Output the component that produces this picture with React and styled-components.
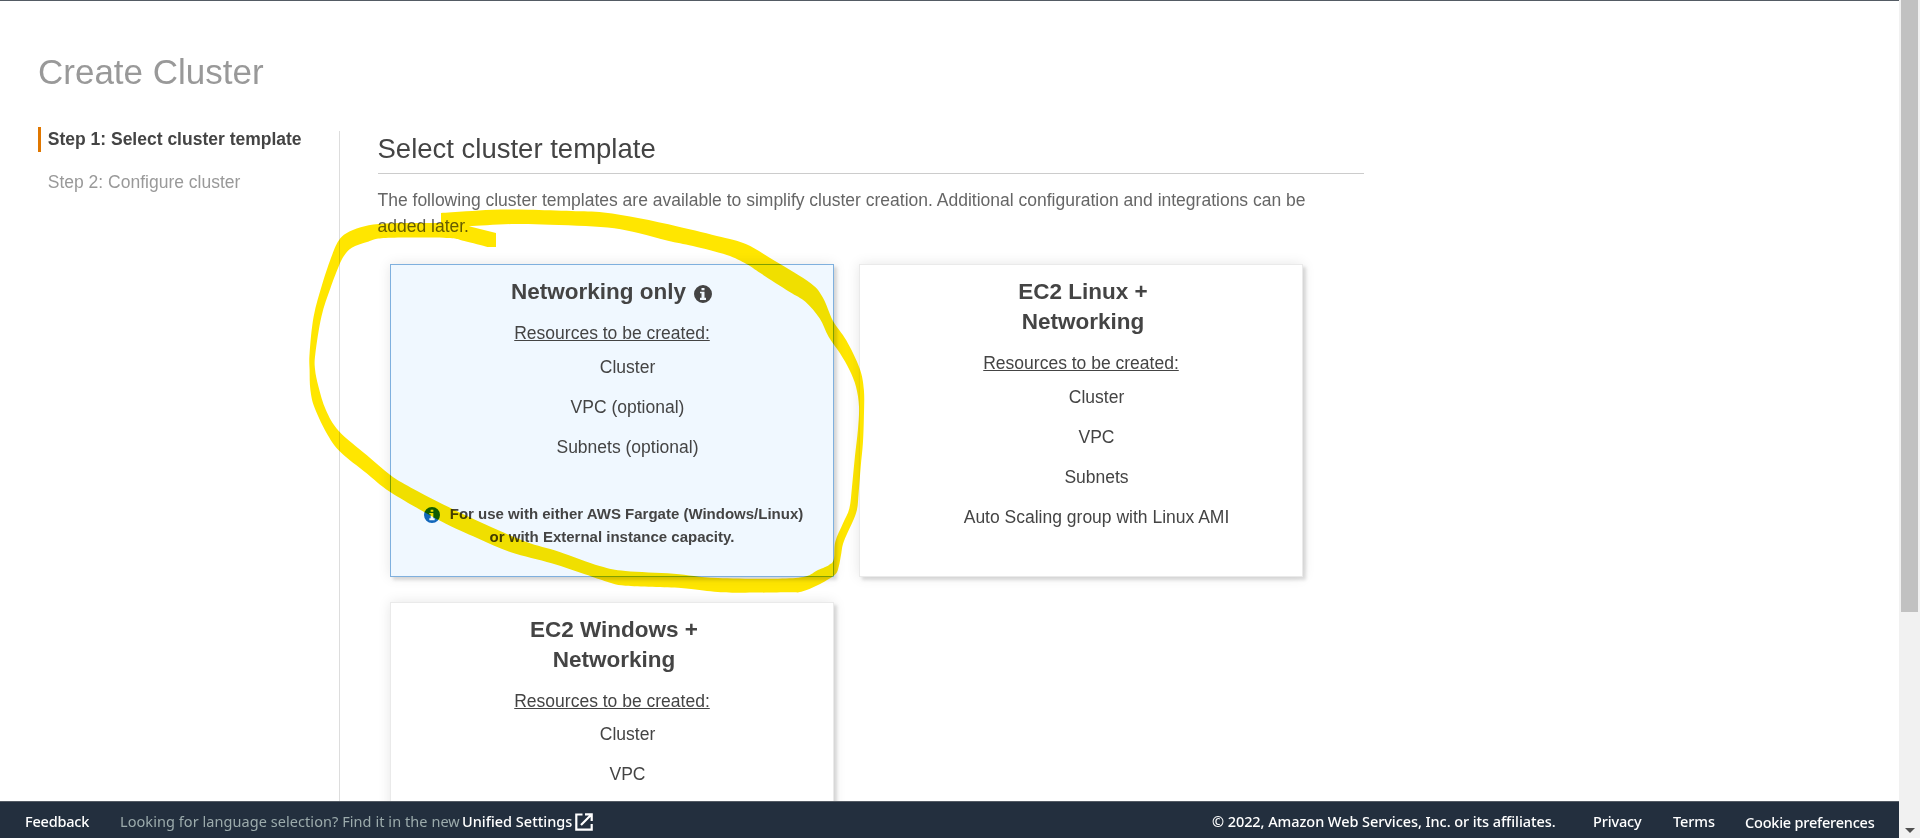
import React from 'react';
import styled, { createGlobalStyle } from 'styled-components';

const GlobalStyle = createGlobalStyle`
  * { box-sizing: border-box; }
  html, body { margin: 0; padding: 0; overflow: hidden; background: #fff; }
  body { font-family: "Liberation Sans", Arial, sans-serif; font-size: 17.5px; color: #444; }
  h1, h2, h3, p, ul { margin: 0; padding: 0; }
`;

const Window = styled.div`
  display: flex;
  width: 1920px;
  height: 838px;
  position: relative;
  overflow: hidden;
`;

const Page = styled.div`
  display: flex;
  flex-direction: column;
  width: 1899px;
  height: 838px;
  border-top: 1px solid #545b64;
`;

const Body = styled.main`
  flex: 1;
  min-height: 0;
  overflow: hidden;
  padding: 51px 38px 0;
`;

const PageTitle = styled.h1`
  font-size: 35px;
  line-height: 40px;
  font-weight: 400;
  color: #999;
`;

const Columns = styled.div`
  display: flex;
  align-items: flex-start;
  margin-top: 35px;
`;

const Steps = styled.nav`
  width: 301px;
  display: flex;
  flex-direction: column;
  gap: 18px;
`;

const Step = styled.div`
  height: 25px;
  line-height: 25px;
  padding-left: 6.75px;
  white-space: nowrap;
  border-left: 3px solid ${(p) => (p.$active ? '#e07700' : 'transparent')};
  font-weight: ${(p) => (p.$active ? 700 : 400)};
  color: ${(p) => (p.$active ? '#444' : '#999')};
`;

const Content = styled.section`
  width: 1025px;
  height: 900px;
  margin-top: 4px;
  padding-left: 37.5px;
  border-left: 1px solid #ddd;
`;

const SectionTitle = styled.h2`
  height: 43px;
  padding-top: 1px;
  line-height: 34px;
  font-size: 27.5px;
  font-weight: 400;
  border-bottom: 1px solid #ccc;
`;

const Intro = styled.p`
  margin-top: 13px;
  padding-right: 40px;
  line-height: 26.25px;
  color: #666;
`;

const Cards = styled.div`
  display: grid;
  grid-template-columns: 444px 444px;
  column-gap: 25px;
  row-gap: 25px;
  margin: 24px 0 0 12.5px;
`;

const Card = styled.article`
  height: 313px;
  padding: 12px 18px 0;
  text-align: center;
  background: ${(p) => (p.$selected ? '#f0f8ff' : '#fff')};
  border: 1px solid ${(p) => (p.$selected ? '#7fb0de' : '#eaeaea')};
  box-shadow: 0 0 12px rgba(0, 0, 0, 0.1), 3px 3px 3px rgba(0, 0, 0, 0.12);
`;

const CardTitle = styled.h3`
  width: 206px;
  margin: 0 auto;
  padding-left: ${(p) => (p.$oneLine ? 0 : 4)}px;
  padding-right: ${(p) => (p.$oneLine ? 1 : 0)}px;
  display: flex;
  justify-content: center;
  align-items: center;
  gap: 8px;
  white-space: ${(p) => (p.$oneLine ? 'nowrap' : 'normal')};
  font-size: 22.5px;
  line-height: 30px;
  font-weight: 700;
  svg { width: 18px; height: 18px; margin-top: 5px; flex: none; }
`;

const ResourcesLabel = styled.p`
  margin-top: 13px;
  line-height: 26px;
  text-decoration: underline;
  text-underline-offset: 1px;
  text-decoration-thickness: 1px;
`;

const Resources = styled.ul`
  list-style: none;
  padding-left: 31px;
  margin-top: ${(p) => (p.$tight ? 0 : 1)}px;
`;

const Resource = styled.li`
  height: 40px;
  line-height: 40px;
`;

const Note = styled.p`
  margin-top: 35px;
  font-size: 15px;
  line-height: 23px;
  font-weight: 700;
  svg { width: 16px; height: 16px; color: #1166bb; margin: 0 10px 0 3px; vertical-align: -4px; }
`;

const Footer = styled.footer`
  flex: none;
  height: 37px;
  display: flex;
  align-items: flex-start;
  padding: 9px 25px 0 25px;
  background: #232f3e;
  border-top: 1px solid #545b64;
  color: #fff;
  font-family: "Noto Sans", "Open Sans", sans-serif;
  font-size: 14.5px;
  line-height: 21px;
  white-space: nowrap;
`;

const FooterText = styled.span`
  width: ${(p) => p.$width}px;
  margin-left: ${(p) => p.$gap || 0}px;
  padding-top: ${(p) => p.$drop || 0}px;
  letter-spacing: ${(p) => p.$track || 0}px;
  font-weight: ${(p) => (p.$muted ? 400 : 500)};
  color: ${(p) => (p.$muted ? '#9cabac' : '#fff')};
`;

const ExternalIcon = styled.svg`
  width: 18px;
  height: 18px;
  margin: 2px 0 0 3px;
`;

const Spacer = styled.div`
  flex: 1;
`;

const Scrollbar = styled.div`
  width: 21px;
  height: 838px;
  padding: 0 2px;
  display: flex;
  flex-direction: column;
  justify-content: space-between;
  align-items: center;
  background: #f1f1f1;
`;

const Thumb = styled.div`
  width: 17px;
  height: 612px;
  background: #c1c1c1;
`;

const ArrowDown = styled.div`
  width: 0;
  height: 0;
  margin-bottom: 5px;
  border: 5px solid transparent;
  border-bottom: 0;
  border-top-color: #505050;
`;

const Marker = styled.svg`
  position: absolute;
  left: 0;
  top: 0;
  pointer-events: none;
  mix-blend-mode: multiply;
`;

// Smooth curve through a run of points.
const curve = (pts) => {
  let d = '';
  for (let i = 0; i < pts.length - 1; i += 1) {
    const a = pts[i - 1] || pts[i];
    const b = pts[i];
    const c = pts[i + 1];
    const e = pts[i + 2] || c;
    d += `C${b[0] + (c[0] - a[0]) / 6} ${b[1] + (c[1] - a[1]) / 6} ${c[0] - (e[0] - b[0]) / 6} ${c[1] - (e[1] - b[1]) / 6} ${c[0]} ${c[1]}`;
  }
  return d;
};

const outer = [
  [441, 213], [466, 211.3], [493, 209.7], [528.5, 209.7], [571.4, 211], [603.6, 212.5], [639.3, 218.3],
  [678.6, 226.7], [721.4, 237], [746.4, 244.3], [775, 261], [810.7, 283.3], [823.2, 298.3], [832.9, 320.7],
  [846.4, 340.5], [859.6, 368.3], [863.9, 390], [863.9, 416.7], [862.9, 443.3], [860.7, 466.7], [858.6, 493.3],
  [856, 513.3], [844, 541], [841.3, 553.3], [838.7, 566.7], [834.6, 575], [818, 585], [801.3, 591.7],
  [788.3, 592.3], [740, 592.7], [714.3, 591.7], [681, 588], [625.6, 585.7], [607, 581.7], [584.9, 574.3],
  [551.6, 563.3], [510.9, 552.3], [477.6, 538.3], [440.6, 521], [390.6, 492.3], [366.6, 473.3], [340.7, 452.3],
  [327.7, 435], [314.8, 408.3], [310.4, 390], [309.6, 370], [309.6, 353.3], [313.6, 316.7], [322.5, 283.3],
  [332.1, 255], [338.6, 240.7], [346.4, 233.3], [360.7, 227.3], [378.6, 224], [407, 223], [441, 223],
];

const inner = [
  [487.5, 247], [464.3, 241], [446.4, 238], [385.7, 238], [367.9, 241.7], [351.8, 247.7], [344.6, 255],
  [339.3, 265], [330.4, 288.3], [321.4, 316.7], [315.4, 353.3], [315, 369], [318.5, 386.7], [325.9, 410],
  [338.8, 431], [366.6, 455], [390.6, 475.3], [411, 487.7], [448, 506.7], [485, 524.3], [525.7, 541.7],
  [559, 551.7], [599.7, 566], [625.6, 571], [673.7, 573.7], [718, 578], [795.7, 578], [818, 570], [829, 565],
  [833.8, 559.3], [835.3, 541.7], [843, 523.3], [849.4, 508.3], [852, 486.7], [854.9, 456.7], [857.9, 430],
  [859, 406.7], [856, 386.7], [849.5, 370], [840, 353.3], [828.6, 336.7], [819.6, 318.3], [805.4, 301.7],
  [789.3, 291.7], [760.7, 273.3], [746.4, 264], [726.8, 255], [692.9, 246], [667.9, 240.7], [639.3, 233.3],
  [614.3, 228.3], [585.7, 226], [550, 224.7], [514, 224], [469, 226.3],
];

const markerPath = `M441 213${curve(outer)}ZM469 226.3L496 233V247H487.5${curve(inner)}Z`;

function InfoIcon() {
  return (
    <svg viewBox="0 0 12 12" fill="currentColor">
      <path
        fillRule="evenodd"
        d="M6 0a6 6 0 1 1 0 12a6 6 0 0 1 0-12ZM5 2V3.5H7V2ZM4 4.5V5.5H5V8.5H4V10H8V8.5H7V4.5Z"
      />
    </svg>
  );
}

function ClusterCard({ title, info, selected, tight, resources, note }) {
  return (
    <Card $selected={selected}>
      <CardTitle $oneLine={info}>
        {title}
        {info && <InfoIcon />}
      </CardTitle>
      <ResourcesLabel>Resources to be created:</ResourcesLabel>
      <Resources $tight={tight}>
        {resources.map((name) => (
          <Resource key={name}>{name}</Resource>
        ))}
      </Resources>
      {note && (
        <Note>
          <InfoIcon />
          {note[0]}
          <br />
          {note[1]}
        </Note>
      )}
    </Card>
  );
}

export default function App() {
  return (
    <Window>
      <GlobalStyle />
      <Page>
        <Body>
          <PageTitle>Create Cluster</PageTitle>
          <Columns>
            <Steps>
              <Step $active>Step 1: Select cluster template</Step>
              <Step>Step 2: Configure cluster</Step>
            </Steps>
            <Content>
              <SectionTitle>Select cluster template</SectionTitle>
              <Intro>
                The following cluster templates are available to simplify cluster creation. Additional
                configuration and integrations can be added later.
              </Intro>
              <Cards>
                <ClusterCard
                  title="Networking only"
                  info
                  selected
                  resources={['Cluster', 'VPC (optional)', 'Subnets (optional)']}
                  note={['For use with either AWS Fargate (Windows/Linux)', 'or with External instance capacity.']}
                />
                <ClusterCard
                  title="EC2 Linux + Networking"
                  resources={['Cluster', 'VPC', 'Subnets', 'Auto Scaling group with Linux AMI']}
                />
                <ClusterCard
                  title="EC2 Windows + Networking"
                  tight
                  resources={['Cluster', 'VPC']}
                />
              </Cards>
            </Content>
          </Columns>
        </Body>
        <Footer>
          <FooterText $width={64} $track={-0.22}>Feedback</FooterText>
          <FooterText $width={342} $gap={31} $track={0.06} $muted>
            Looking for language selection? Find it in the new
          </FooterText>
          <FooterText $width={110}>Unified Settings</FooterText>
          <ExternalIcon viewBox="0 0 18 18" fill="none" stroke="#fff" strokeWidth="2.2">
            <path d="M7.5 1.5H1.3V16.7H16.7V11" />
            <path d="M10 1.3H16.7V8M16.2 1.8L6 12" />
          </ExternalIcon>
          <Spacer />
          <FooterText $width={343} $track={-0.07}>
            © 2022, Amazon Web Services, Inc. or its affiliates.
          </FooterText>
          <FooterText $width={49} $gap={38} $track={-0.15}>Privacy</FooterText>
          <FooterText $width={41} $gap={31} $track={-0.1}>Terms</FooterText>
          <FooterText $width={129} $gap={31} $drop={1} $track={-0.22}>Cookie preferences</FooterText>
        </Footer>
      </Page>
      <Scrollbar>
        <Thumb />
        <ArrowDown />
      </Scrollbar>
      <Marker width="1899" height="838" viewBox="0 0 1899 838">
        <path d={markerPath} fill="#ffe600" fillRule="evenodd" />
      </Marker>
    </Window>
  );
}
